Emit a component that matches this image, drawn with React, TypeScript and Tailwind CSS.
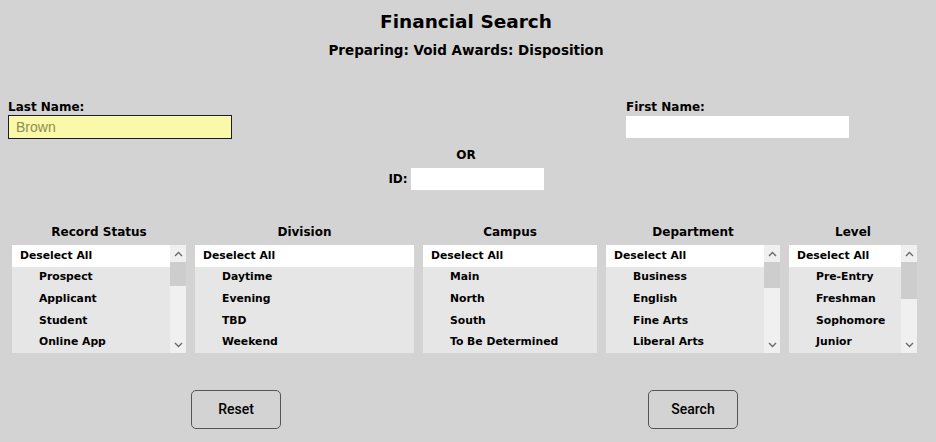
import React from "react";

function Chevron({ up }: { up?: boolean }) {
  return (
    <svg width="9" height="6" viewBox="0 0 9 6" className="block">
      <polyline
        points={up ? "1,5 4.5,1.5 8,5" : "1,1 4.5,4.5 8,1"}
        fill="none"
        stroke="#6a6a6a"
        strokeWidth="1.4"
      />
    </svg>
  );
}

function ListBox({
  title,
  items,
  w,
  thumb,
}: {
  title: string;
  items: string[];
  w: string;
  thumb?: string;
}) {
  return (
    <div className={`flex flex-col ${w}`}>
      <div className="mb-[6px] h-[14px] text-center text-[12px] font-bold leading-[14px] text-black">
        {title}
      </div>
      <div className="flex h-[108px] bg-[#e6e6e6]">
        <div className="grid flex-1 grid-rows-5">
          <div className="flex items-center bg-white pl-2 text-[10.8px] font-bold text-black">
            Deselect All
          </div>
          {items.map((it) => (
            <div
              key={it}
              className="flex items-center pl-[27px] text-[10.8px] font-bold text-black"
            >
              {it}
            </div>
          ))}
        </div>
        {thumb && (
          <div className="flex w-4 flex-col bg-[#f0f0f0]">
            <div className="flex h-[17px] items-center justify-center">
              <Chevron up />
            </div>
            <div className="flex-1">
              <div className={`bg-[#cdcdcd] ${thumb}`} />
            </div>
            <div className="flex h-[17px] items-center justify-center">
              <Chevron />
            </div>
          </div>
        )}
      </div>
    </div>
  );
}

export default function App() {
  return (
    <div className="h-[442px] w-[936px] overflow-hidden bg-[#d3d3d3] font-['DejaVu_Sans',sans-serif] text-black">
      <div className="w-[932px]">
        <div className="pt-[10px] text-center text-[18.5px] font-bold leading-[24px]">
          Financial Search
        </div>
        <div className="mt-[6px] text-center text-[13.5px] font-bold leading-[20px]">
          Preparing: Void Awards: Disposition
        </div>

        <div className="mt-[40px] flex pl-2">
          <div className="flex w-[224px] flex-col">
            <div className="text-[12px] font-bold leading-[14px]">Last Name:</div>
            <div className="mt-px flex h-[24px] items-center border border-[#1c1c28] bg-[#f9f9a9] pl-[7px] font-['Liberation_Sans',Arial,sans-serif] text-[14px] text-[#8e8e50]">
              Brown
            </div>
          </div>
          <div className="ml-[394px] flex w-[223px] flex-col">
            <div className="text-[12px] font-bold leading-[14px]">First Name:</div>
            <div className="mt-[2px] h-[22px] bg-white" />
          </div>
        </div>

        <div className="mt-[9px] text-center text-[12px] font-bold leading-[14px]">OR</div>
        <div className="mt-[6px] flex h-[22px] items-center justify-center gap-[3px]">
          <div className="text-[12px] font-bold leading-[14px]">ID:</div>
          <div className="h-[22px] w-[133px] bg-white" />
        </div>

        <div className="mt-[35px] flex gap-[9px] pl-3">
          <ListBox
            title="Record Status"
            w="w-[174px]"
            items={["Prospect", "Applicant", "Student", "Online App"]}
            thumb="h-[24px]"
          />
          <ListBox
            title="Division"
            w="w-[219px]"
            items={["Daytime", "Evening", "TBD", "Weekend"]}
          />
          <ListBox
            title="Campus"
            w="w-[174px]"
            items={["Main", "North", "South", "To Be Determined"]}
          />
          <ListBox
            title="Department"
            w="w-[174px]"
            items={["Business", "English", "Fine Arts", "Liberal Arts"]}
            thumb="h-[26px]"
          />
          <ListBox
            title="Level"
            w="w-[128px]"
            items={["Pre-Entry", "Freshman", "Sophomore", "Junior"]}
            thumb="h-[37px]"
          />
        </div>

        <div className="mt-[37px] flex pl-[191px]">
          <button className="flex h-[39px] w-[90px] items-center justify-center rounded-[5px] border border-[#555555] font-['Roboto',sans-serif] text-[14px] font-medium text-black">
            Reset
          </button>
          <button className="ml-[367px] flex h-[39px] w-[90px] items-center justify-center rounded-[5px] border border-[#555555] font-['Roboto',sans-serif] text-[14px] font-medium text-black">
            Search
          </button>
        </div>
      </div>
    </div>
  );
}
